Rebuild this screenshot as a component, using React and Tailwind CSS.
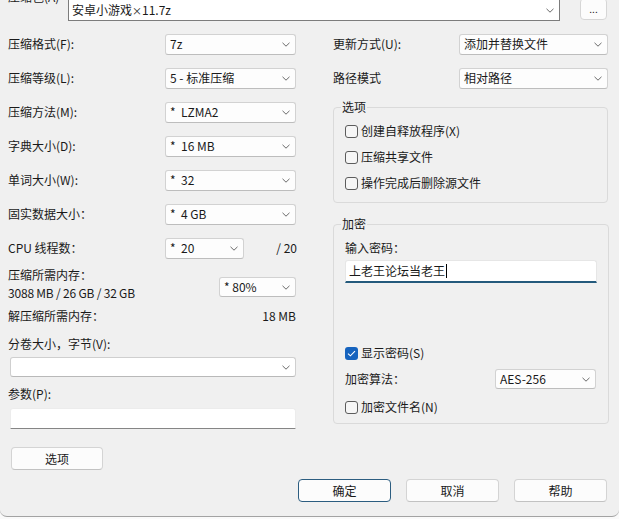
import React from "react";

const Chevron = () => (
  <svg width="8" height="5" viewBox="0 0 8 5" className="shrink-0">
    <path d="M0.5 0.8 L4 4.2 L7.5 0.8" fill="none" stroke="#6a6a6a" strokeWidth="1" />
  </svg>
);

function Select({ value, className = "" }) {
  return (
    <div
      className={
        "flex items-center justify-between bg-[#fdfdfd] border border-[#d2d2d2] border-b-[#bdbdbd] rounded-[3px] pl-[4px] pr-[5px] " +
        className
      }
    >
      <span className="whitespace-pre leading-[16px]">{value}</span>
      <Chevron />
    </div>
  );
}

function Row({ label, value }) {
  return (
    <div className="flex items-center h-[34px]">
      <div className="w-[157px] whitespace-nowrap">{label}</div>
      <Select value={value} className="w-[131px] h-[21px]" />
    </div>
  );
}

function Check({ label, checked = false, className = "" }) {
  return (
    <div className={"flex items-center h-[26px] " + className}>
      {checked ? (
        <div className="w-[13px] h-[13px] rounded-[3px] bg-[#1663be] flex items-center justify-center">
          <svg width="9" height="7" viewBox="0 0 9 7">
            <path d="M1 3.6 L3.4 5.8 L8 1.2" fill="none" stroke="#ffffff" strokeWidth="1.1" />
          </svg>
        </div>
      ) : (
        <div className="w-[13px] h-[13px] rounded-[3px] border border-[#5c5c5c] bg-[#f6f6f6]" />
      )}
      <span className="ml-[3px] whitespace-nowrap leading-[16px]">{label}</span>
    </div>
  );
}

function Button({ children, primary = false, className = "" }) {
  return (
    <div
      className={
        "flex items-center justify-center h-[23px] rounded-[4px] bg-[#fcfcfc] border " +
        (primary ? "border-[#2c5d80] " : "border-[#d4d4d4] border-b-[#c2c2c2] ") +
        className
      }
    >
      {children}
    </div>
  );
}

export default function App() {
  return (
    <div className="w-[619px] h-[519px] bg-[#fafafa] font-['Noto_Sans_CJK_SC',sans-serif] text-[12px] text-[#1a1a1a]">
      <div className="h-[517px] bg-[#f0f0f0] border-b border-[#a3a3a3] rounded-b-[7px] overflow-hidden flex flex-col">
        {/* top row */}
        <div className="flex h-[22px] mt-[-1px] shrink-0">
          <div className="ml-[8px] w-[60px] mt-[-10px] leading-[16px] whitespace-nowrap">压缩包(A)</div>
          <div className="w-[492px] h-[22px] flex items-center justify-between bg-white border border-[#7c7c7c] pl-[3px] pr-[5px]">
            <span className="leading-[16px] whitespace-nowrap">
              安卓小游戏<span className="text-[10px]">×</span>11.7z
            </span>
            <Chevron />
          </div>
          <div className="ml-[20px] w-[27px] h-[22px] mt-[-1px] flex items-center justify-center bg-[#fcfcfc] border border-[#d6d6d6] rounded-[4px] text-[10px] leading-none">
            ...
          </div>
        </div>

        {/* columns */}
        <div className="flex mt-[6px] shrink-0">
          {/* left column */}
          <div className="ml-[8px] w-[289px] flex flex-col">
            <Row label="压缩格式(F):" value="7z" />
            <Row label="压缩等级(L):" value="5 - 标准压缩" />
            <Row label="压缩方法(M):" value={"*  LZMA2"} />
            <Row label="字典大小(D):" value={"*  16 MB"} />
            <Row label="单词大小(W):" value={"*  32"} />
            <Row label="固实数据大小：" value={"*  4 GB"} />
            <div className="flex items-center h-[34px]">
              <div className="w-[157px] whitespace-nowrap">CPU 线程数：</div>
              <Select value={"*  20"} className="w-[79px] h-[21px]" />
              <div className="flex-1 text-right whitespace-nowrap">/ 20</div>
            </div>

            <div className="flex justify-between mt-[1px]">
              <div className="flex flex-col leading-[18px]">
                <span className="whitespace-nowrap">压缩所需内存：</span>
                <span className="whitespace-nowrap tracking-[-0.2px]">3088 MB / 26 GB / 32 GB</span>
              </div>
              <Select value="* 80%" className="w-[77px] h-[20px] mt-[11px] mr-[1px]" />
            </div>

            <div className="flex justify-between items-center h-[28px] pr-[1px]">
              <span className="whitespace-nowrap">解压缩所需内存：</span>
              <span className="whitespace-nowrap">18 MB</span>
            </div>

            <div className="mt-[6px] leading-[16px] whitespace-nowrap">分卷大小，字节(V):</div>
            <div className="mt-[5px] ml-[2px] w-[286px] h-[20px] flex items-center justify-end bg-white border border-[#cfcfcf] border-b-[#b9b9b9] rounded-[3px] pr-[5px]">
              <Chevron />
            </div>

            <div className="mt-[9px] leading-[16px] whitespace-nowrap">参数(P):</div>
            <div className="mt-[6px] ml-[2px] w-[286px] h-[21px] bg-white border border-[#ececec] border-b-[#858585] rounded-t-[3px]" />

            <Button className="mt-[18px] ml-[3px] w-[92px]">选项</Button>
          </div>

          {/* right column */}
          <div className="ml-[36px] w-[275px] flex flex-col">
            <div className="flex items-center h-[34px]">
              <div className="w-[126px] whitespace-nowrap">更新方式(U):</div>
              <Select value="添加并替换文件" className="w-[149px] h-[21px]" />
            </div>
            <div className="flex items-center h-[34px]">
              <div className="w-[126px] whitespace-nowrap">路径模式</div>
              <Select value="相对路径" className="w-[149px] h-[21px]" />
            </div>

            <fieldset className="mt-[4px] border border-[#dadada] rounded-[4px] px-[11px] pt-[3px] pb-[6px]">
              <legend className="ml-[-4px] px-[1px] leading-[16px]">选项</legend>
              <Check label="创建自释放程序(X)" />
              <Check label="压缩共享文件" />
              <Check label="操作完成后删除源文件" />
            </fieldset>

            <fieldset className="mt-[13px] border border-[#dadada] rounded-[4px] px-[11px] pb-[3px]">
              <legend className="ml-[-4px] px-[1px] leading-[16px]">加密</legend>
              <div className="mt-[8px] leading-[16px] whitespace-nowrap">输入密码：</div>
              <div className="mt-[4px] w-[252px] h-[23px] flex items-center bg-white border border-[#e6e6e6] border-b-2 border-b-[#245a7c] rounded-t-[3px] pl-[3px]">
                <span className="leading-[16px] whitespace-nowrap">上老王论坛当老王</span>
                <span className="w-[1px] h-[14px] bg-black ml-[1px]" />
              </div>
              <Check label="显示密码(S)" checked className="mt-[57px]" />
              <div className="flex items-center h-[22px] mt-[2px]">
                <div className="w-[150px] whitespace-nowrap">加密算法：</div>
                <Select value="AES-256" className="w-[101px] h-[20px]" />
              </div>
              <Check label="加密文件名(N)" className="mt-[4px]" />
            </fieldset>
          </div>
        </div>

        {/* bottom buttons */}
        <div className="flex justify-end gap-[15px] mr-[12px] mt-[9px]">
          <Button primary className="w-[93px]">确定</Button>
          <Button className="w-[93px]">取消</Button>
          <Button className="w-[93px]">帮助</Button>
        </div>
      </div>
    </div>
  );
}
